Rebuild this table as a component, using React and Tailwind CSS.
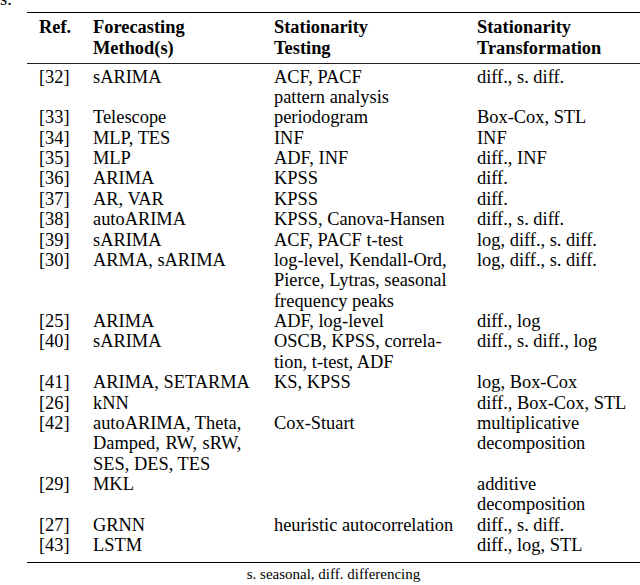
import React from "react";

const rows = [
  ["[32]", ["sARIMA"], ["ACF, PACF", "pattern analysis"], ["diff., s. diff."]],
  ["[33]", ["Telescope"], ["periodogram"], ["Box-Cox, STL"]],
  ["[34]", ["MLP, TES"], ["INF"], ["INF"]],
  ["[35]", ["MLP"], ["ADF, INF"], ["diff., INF"]],
  ["[36]", ["ARIMA"], ["KPSS"], ["diff."]],
  ["[37]", ["AR, VAR"], ["KPSS"], ["diff."]],
  ["[38]", ["autoARIMA"], ["KPSS, Canova-Hansen"], ["diff., s. diff."]],
  ["[39]", ["sARIMA"], ["ACF, PACF t-test"], ["log, diff., s. diff."]],
  [
    "[30]",
    ["ARMA, sARIMA"],
    ["log-level, Kendall-Ord,", "Pierce, Lytras, seasonal", "frequency peaks"],
    ["log, diff., s. diff."],
  ],
  ["[25]", ["ARIMA"], ["ADF, log-level"], ["diff., log"]],
  ["[40]", ["sARIMA"], ["OSCB, KPSS, correla-", "tion, t-test, ADF"], ["diff., s. diff., log"]],
  ["[41]", ["ARIMA, SETARMA"], ["KS, KPSS"], ["log, Box-Cox"]],
  ["[26]", ["kNN"], [], ["diff., Box-Cox, STL"]],
  [
    "[42]",
    ["autoARIMA, Theta,", "Damped, RW, sRW,", "SES, DES, TES"],
    ["Cox-Stuart"],
    ["multiplicative", "decomposition"],
  ],
  ["[29]", ["MKL"], [], ["additive", "decomposition"]],
  ["[27]", ["GRNN"], ["heuristic autocorrelation"], ["diff., s. diff."]],
  ["[43]", ["LSTM"], [], ["diff., log, STL"]],
];

// lines before the last one are stretched to the widest line, like a justified p{} column
const Lines = ({ lines }) => (
  <div>
    <div className="inline-block">
      {lines.map((l, i) => (
        <div
          key={i}
          className={
            i < lines.length - 1 && lines.length > 2
              ? "whitespace-nowrap [text-align-last:justify]"
              : "whitespace-nowrap"
          }
        >
          {l}
        </div>
      ))}
    </div>
  </div>
);

export default function App() {
  return (
    <div
      className="w-[640px] h-[585px] overflow-hidden bg-white text-black"
      style={{ fontFamily: '"Liberation Serif", "Times New Roman", serif' }}
    >
      <div className="-mt-[11px] text-[18.4px] leading-[20.37px]">s.</div>
      <div className="ml-[27px] mt-[3px]">
        <div className="border-t-[1.5px] border-black" />
        <div className="grid grid-cols-[54px_181px_203px_1fr] pl-[12px] pt-[4px] pb-[4px] text-[18.4px] leading-[20.6px] font-bold">
          <div>Ref.</div>
          <Lines lines={["Forecasting", "Method(s)"]} />
          <Lines lines={["Stationarity", "Testing"]} />
          <Lines lines={["Stationarity", "Transformation"]} />
        </div>
        <div className="border-t border-[#222]" />
        <div className="grid grid-cols-[54px_181px_203px_1fr] pl-[12px] pt-[3px] pb-[6px] text-[18.4px] leading-[20.37px]">
          {rows.map(([ref, method, test, trans]) => (
            <React.Fragment key={ref}>
              <div>{ref}</div>
              <Lines lines={method} />
              <Lines lines={test} />
              <Lines lines={trans} />
            </React.Fragment>
          ))}
        </div>
        <div className="border-t-[1.5px] border-black" />
        <div className="mt-[3px] text-center text-[15px] leading-[17px]">
          s. seasonal, diff. differencing
        </div>
      </div>
    </div>
  );
}
